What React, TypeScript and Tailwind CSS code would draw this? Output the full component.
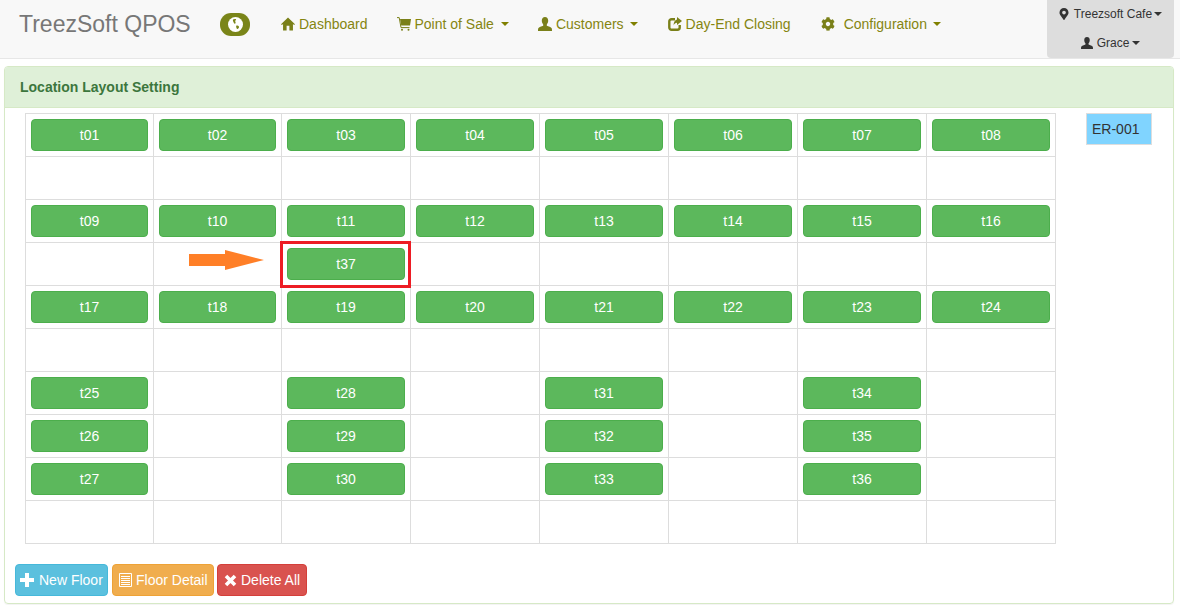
import React from 'react'
import { FaCog, FaMapMarkerAlt } from 'react-icons/fa'

const rows: (string | null)[][] = [
  ['t01', 't02', 't03', 't04', 't05', 't06', 't07', 't08'],
  [null, null, null, null, null, null, null, null],
  ['t09', 't10', 't11', 't12', 't13', 't14', 't15', 't16'],
  [null, null, 't37', null, null, null, null, null],
  ['t17', 't18', 't19', 't20', 't21', 't22', 't23', 't24'],
  [null, null, null, null, null, null, null, null],
  ['t25', null, 't28', null, 't31', null, 't34', null],
  ['t26', null, 't29', null, 't32', null, 't35', null],
  ['t27', null, 't30', null, 't33', null, 't36', null],
  [null, null, null, null, null, null, null, null],
]

function UserIcon({ className }: { className?: string }) {
  return (
    <svg className={className} viewBox="0 0 14 14" fill="currentColor">
      <path d="M7 0c2 0 3.200 1.500 3.200 3.600 0 1.600-.6 3-1.400 3.800v1.300c1.600.7 4.400 1.400 4.900 2.600.2.5.3 1.300.3 2.700H0c0-1.400.1-2.200.3-2.700.5-1.200 3.300-1.900 4.900-2.600V7.400c-.8-.8-1.400-2.200-1.400-3.800C3.800 1.500 5 0 7 0z" />
    </svg>
  )
}

function HomeIcon() {
  return (
    <svg className="w-[15px] h-[14px]" viewBox="0 0 15 14" fill="currentColor">
      <path d="M7.500 0 15 7.200l-1 1-1.200-1.100V14H9V9H6v5H2.200V7.100L1 8.200l-1-1z" />
    </svg>
  )
}

function CartIcon() {
  return (
    <svg className="w-[14px] h-[14px]" viewBox="0 0 14 14">
      <path d="M3 2h11l-1 6.500H4.200z" fill="currentColor" />
      <path d="M0 .6h2.200L4 10.600h8.500" fill="none" stroke="currentColor" />
      <circle cx="5" cy="12.700" r="1" fill="currentColor" />
      <circle cx="11.500" cy="12.700" r="1" fill="currentColor" />
    </svg>
  )
}

function ShareIcon() {
  return (
    <svg className="w-[14px] h-[14px]" viewBox="0 0 14 14">
      <path d="M11.700 8v2.500a2.200 2.200 0 0 1-2.200 2.200H3.500a2.200 2.200 0 0 1-2.200-2.200V4.500a2.200 2.200 0 0 1 2.200-2.200H7" fill="none" stroke="currentColor" strokeWidth="2.400" />
      <path d="M9 0l5 4-5 4V5.800C7.400 5.800 6.300 6.600 5.600 8.500 5.600 5.600 6.800 3 9 2.600z" fill="currentColor" />
    </svg>
  )
}

function GlobeIcon() {
  return (
    <svg className="w-[15px] h-[15px]" viewBox="0 0 15 15">
      <circle cx="7.500" cy="7.500" r="7.500" fill="#fff" />
      <path d="M5 2.500c1-.7 2.500-.7 3-.2.400.5-.6 1-.8 1.700-.2.800.8 1.200.3 2.200-.4.8-1.300.4-1.700-.5C5.400 4.800 4.500 3 5 2.500zM8.500 8.500c1 0 2.500.5 2.500 1.400 0 1-1 2.300-1.800 2-.8-.4-1.500-3.400-.7-3.400z" fill="#7a8519" />
    </svg>
  )
}

function PlusIcon() {
  return (
    <svg className="w-3.5 h-3.5 mr-[5px]" viewBox="0 0 14 14" fill="currentColor">
      <path d="M5 0h4v5h5v4H9v5H5V9H0V5h5z" />
    </svg>
  )
}

function ListAltIcon() {
  return (
    <svg className="w-[13px] h-[14px] mr-1" viewBox="0 0 13 14" fill="none" stroke="currentColor">
      <path d="M.5.500h12v13H.5z" />
      <path d="M2 3.500h9M2 5.500h9M2 7.500h9M2 9.500h9M2 11.500h9" />
    </svg>
  )
}

function RemoveIcon() {
  return (
    <svg className="w-[13px] h-[13px] mr-1" viewBox="0 0 13 13" stroke="currentColor" strokeWidth="3.600">
      <path d="M2 2l9 9M11 2l-9 9" />
    </svg>
  )
}

function Caret({ className = 'border-t-[#808000]', gap = 'ml-[7px]' }: { className?: string; gap?: string }) {
  return <span className={`inline-block ${gap} w-0 h-0 border-x-4 border-x-transparent border-t-4 ${className}`} />
}

function NavLink({ icon, label, caretGap, gap = 'mr-1', right = 'pr-[15px]' }: { icon: React.ReactNode; label: string; caretGap?: string; gap?: string; right?: string }) {
  return (
    <a className={`flex items-center pl-[15px] ${right} text-sm text-[#858510] whitespace-nowrap`}>
      <span className={`flex w-3.5 h-3.5 text-[#7a8019] ${gap}`}>{icon}</span>
      {label}
      {caretGap && <Caret gap={caretGap} />}
    </a>
  )
}

export default function App() {
  return (
    <div className="min-h-[605px] bg-white font-['Liberation_Sans',Arial,sans-serif] text-sm text-[#333]">
      <nav className="flex h-[59px] bg-[#f8f8f8] border-b border-[#e7e7e7]">
        <span className="w-[171px] ml-[19px] mt-[11px] text-[23px] leading-[26px] text-[#777] whitespace-nowrap">TreezSoft QPOS</span>
        <span className="ml-[30px] mt-[13px] flex items-center justify-center w-[30px] h-[23px] rounded-[11px] bg-[#7a8519]">
          <GlobeIcon />
        </span>
        <div className="ml-4 flex h-[48px] items-center">
          <NavLink icon={<HomeIcon />} label="Dashboard" right="pr-[14px]" />
          <NavLink icon={<CartIcon />} label="Point of Sale" caretGap="ml-[7px]" right="pr-[14px]" />
          <NavLink icon={<UserIcon className="w-[14px] h-[14px]" />} label="Customers" caretGap="ml-[6px]" />
          <NavLink icon={<ShareIcon />} label="Day-End Closing" />
          <NavLink icon={<FaCog className="w-[14px] h-[14px]" />} label="Configuration" caretGap="ml-[6px]" gap="mr-[9px]" />
        </div>
        <div className="ml-auto mr-[6px] w-[127px] h-[58px] flex flex-col items-center bg-[#ddd] rounded-b text-xs text-[#333]">
          <span className="flex h-[28px] items-center whitespace-nowrap">
            <FaMapMarkerAlt className="w-2.5 h-3 mr-[5px]" />
            Treezsoft Cafe
            <Caret className="border-t-[#333]" gap="ml-[2px]" />
          </span>
          <span className="flex h-[29px] items-center whitespace-nowrap">
            <UserIcon className="w-3 h-3 mr-1" />
            Grace
            <Caret className="border-t-[#333]" gap="ml-[3px]" />
          </span>
        </div>
      </nav>

      <section className="ml-1 mr-[6px] mt-[7px] h-[538px] border border-[#d6e9c6] rounded shadow-[0_1px_1px_rgba(0,0,0,0.05)]">
        <h3 className="h-[41px] flex items-center pl-[15px] bg-[#dff0d8] border-b border-[#d6e9c6] rounded-t-[3px] text-sm font-bold text-[#3c763d]">
          Location Layout Setting
        </h3>
        <div className="flex items-start pl-5 pt-[5px]">
          <div className="grid grid-cols-[128px_128px_129px_129px_129px_129px_129px_129px] w-[1031px] border-r border-b border-[#ddd]">
            {rows.flatMap((row, r) =>
              row.map((name, c) => (
                <div key={`${r}-${c}`} className="relative h-[43px] p-[5px] pb-0 border-l border-t border-[#ddd]">
                  {name && (
                    <button className="w-full h-8 bg-[#5cb85c] border border-[#4cae4c] rounded text-sm text-white">{name}</button>
                  )}
                  {name === 't37' && (
                    <div className="absolute z-10 -left-0.5 -top-0.5 w-[131px] h-[47px] border-[3px] border-[#ed1c24]" />
                  )}
                  {r === 3 && c === 1 && (
                    <svg className="absolute left-[35px] top-[7px]" width="76" height="20" viewBox="0 0 76 20">
                      <path d="M0 4h36V0l39 10-39 10v-4H0z" fill="#ff7f27" />
                    </svg>
                  )}
                </div>
              )),
            )}
          </div>
          <div className="ml-[30px] w-[66px] h-[32px] pl-[5px] flex items-center bg-[#80d4ff] border border-[#ddd]">ER-001</div>
        </div>
        <div className="flex mt-5 ml-[10px]">
          <button className="flex items-center h-8 w-[93px] mr-1 pl-1 bg-[#5bc0de] border border-[#46b8da] rounded text-white whitespace-nowrap">
            <PlusIcon />New Floor
          </button>
          <button className="flex items-center h-8 w-[102px] mr-[3px] pl-[6px] bg-[#f0ad4e] border border-[#eea236] rounded text-white whitespace-nowrap">
            <ListAltIcon />Floor Detail
          </button>
          <button className="flex items-center h-8 w-[90px] pl-[6px] bg-[#d9534f] border border-[#d43f3a] rounded text-white whitespace-nowrap">
            <RemoveIcon />Delete All
          </button>
        </div>
      </section>
    </div>
  )
}
